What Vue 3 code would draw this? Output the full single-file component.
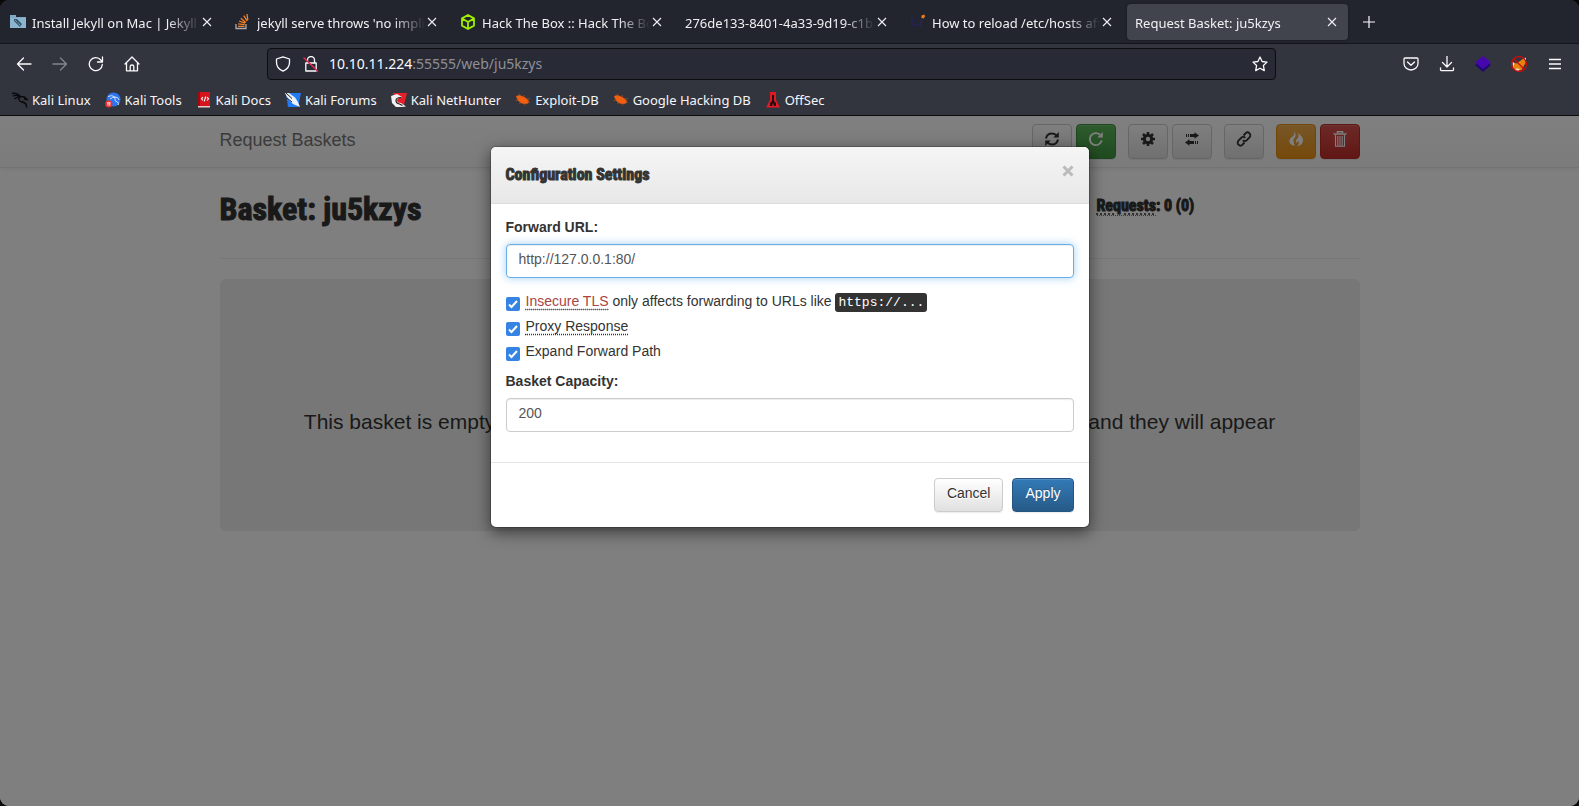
<script setup>
import { ref } from 'vue'

const tabs = [
  { title: 'Install Jekyll on Mac | Jekyll • Simple', icon: 'folder' },
  { title: "jekyll serve throws 'no implicit", icon: 'stack' },
  { title: 'Hack The Box :: Hack The Box', icon: 'cube' },
  { title: '276de133-8401-4a33-9d19-c1b2e', icon: '' },
  { title: 'How to reload /etc/hosts after', icon: 'face' },
  { title: 'Request Basket: ju5kzys', icon: '', active: true },
]

const bookmarks = [
  { label: 'Kali Linux', icon: 'dragon' },
  { label: 'Kali Tools', icon: 'tools' },
  { label: 'Kali Docs', icon: 'docs' },
  { label: 'Kali Forums', icon: 'forums' },
  { label: 'Kali NetHunter', icon: 'hunter' },
  { label: 'Exploit-DB', icon: 'bug' },
  { label: 'Google Hacking DB', icon: 'bug' },
  { label: 'OffSec', icon: 'offsec' },
]

const forwardUrl = ref('http://127.0.0.1:80/')
const insecure = ref(true)
const proxy = ref(true)
const expand = ref(true)
const capacity = ref('200')
</script>

<template>
  <div class="window">
    <header class="chrome">
      <nav class="tabs" aria-label="Tabs">
        <div v-for="t in tabs" :key="t.title" class="tab" :class="{ active: t.active }">
          <svg v-if="t.icon === 'folder'" class="ico" viewBox="0 0 16 16">
            <path d="M0 1h6v2h10v11H0z" fill="#7fa9c6" /><path d="M0 4h16v10H0z" fill="#8db4ce" />
            <path d="M4 5l3 0 5 5-2 3-6-6z" fill="#38586e" /><path d="M5 6l6 6" stroke="#a9c8dc" stroke-width=".8" stroke-dasharray="1 1" />
          </svg>
          <svg v-else-if="t.icon === 'stack'" class="ico" viewBox="0 0 16 16" fill="none">
            <path d="M1 10v4.500h10V10" stroke="#a9adb2" stroke-width="1.300" />
            <path d="M3 12.300h6.500M3.200 9.800l6.400.8M4 7l6 2.200M5.800 4.200l5 4.200M8.800 1.600l3.400 5.600M12 0l.8 6" stroke="#f48024" stroke-width="1.300" />
          </svg>
          <svg v-else-if="t.icon === 'cube'" class="ico" viewBox="0 0 16 16" fill="none" stroke="#9fef00" stroke-width="1.800" stroke-linejoin="round">
            <path d="M8 1l6 3.400v7.200L8 15l-6-3.400V4.400zM2.500 4.800L8 8l5.500-3.200M8 8v6.500" />
          </svg>
          <svg v-else-if="t.icon === 'face'" class="ico" viewBox="0 0 16 16" fill="none">
            <path d="M2 3v10M11 5v8M4 7h1M8 7h1M4 10q2.500 2 5 0" stroke="#25255a" stroke-width="1.200" />
            <path d="M11.500 1.500l3-1 .5 2-1.500 2-2-.5z" fill="#f07c1c" />
          </svg>
          <span class="tab-title">{{ t.title }}</span>
          <button class="tab-close" aria-label="Close tab">
            <svg viewBox="0 0 10 10"><path d="M1 1l8 8M9 1l-8 8" stroke="currentColor" stroke-width="1.100" /></svg>
          </button>
        </div>
        <button class="new-tab" aria-label="New tab">
          <svg viewBox="0 0 12 12"><path d="M6 0v12M0 6h12" stroke="currentColor" stroke-width="1.200" /></svg>
        </button>
      </nav>

      <div class="toolbar">
        <div class="nav-buttons">
          <button aria-label="Back"><svg class="ico" viewBox="0 0 16 16"><path d="M15 8H1.500M7.500 2L1.500 8l6 6" /></svg></button>
          <button aria-label="Forward" disabled><svg class="ico" viewBox="0 0 16 16"><path d="M1 8h13.500M8.500 2l6 6-6 6" /></svg></button>
          <button aria-label="Reload"><svg class="ico" viewBox="0 0 16 16"><path d="M14.300 8.500A6.500 6.500 0 1 1 12.800 4L14.200 5.600M14.500 1v5h-5" /></svg></button>
          <button aria-label="Home"><svg class="ico" viewBox="0 0 16 16"><path d="M1 8l7-7 7 7M2.500 6.800V14.800h11V6.800M6.200 14.500V10.500q0-1.500 1.800-1.500t1.800 1.500v4" /></svg></button>
        </div>
        <div class="urlbar">
          <svg class="ico line" viewBox="0 0 16 16"><path d="M8 .8L14.500 3v3.500c0 4-2.500 7-6.500 8.700C4 13.500 1.500 10.500 1.500 6.500V3z" /></svg>
          <svg class="ico line lock" viewBox="0 0 16 16"><path d="M4.500 7V4a3.500 3.500 0 0 1 7 0v3M2.800 7h10.400v8H2.800z" /><path d="M1 2l13.500 13" stroke="#e22850" stroke-width="1.500" /></svg>
          <span class="address" role="textbox" aria-label="Address"><b>10.10.11.224</b>:55555/web/ju5kzys</span>
          <button aria-label="Bookmark this page"><svg class="ico line" viewBox="0 0 16 16"><path d="M8 1l2.100 4.500 4.900.6-3.600 3.400.9 5.100L8 12.200l-4.300 2.400.9-5.100L1 6.100l4.900-.6z" /></svg></button>
        </div>
        <div class="actions">
          <button aria-label="Pocket"><svg class="ico" viewBox="0 0 16 16"><path d="M2 2h12q1 0 1 1v4.500a7 6.500 0 0 1-14 0V3q0-1 1-1zM4.500 6L8 9.300 11.500 6" /></svg></button>
          <button aria-label="Downloads"><svg class="ico" viewBox="0 0 16 16"><path d="M8 0v10.500M3.500 6.500L8 11l4.500-4.500M1.500 12v1.500q0 1.200 1.200 1.200h10.600q1.200 0 1.200-1.200V12" /></svg></button>
          <button aria-label="Wappalyzer"><svg class="ico" viewBox="0 0 16 16"><path class="solid" d="M0 9l8 7 8-7-8-5z" fill="#1f0a70" /><path class="solid" d="M0 6.500L8 0l8 6.500L8 13z" fill="#4608ad" /></svg></button>
          <button aria-label="FoxyProxy">
            <svg class="ico" viewBox="0 0 16 16"><path class="solid" d="M9 5l5-3.500.5 5.500-2 3.500-2 3.500-5 1-3.500-3 .5-5.500 3 1z" fill="#e8820e" /><path class="solid" d="M1.500 5.500l2 2-1.500 4zM12.500 3l2.500-1.500v4zM5 12.500l4 .5-2 2-3-.5z" fill="#f5e6d8" /><circle cx="8" cy="8" r="7.400" stroke="#cc0c10" /><path d="M2.800 2.800l10.400 10.400" stroke="#cc0c10" /></svg>
          </button>
          <button aria-label="Menu"><svg class="ico" viewBox="0 0 16 16"><path d="M2 3.500h12M2 8h12M2 12.500h12" stroke-linecap="butt" /></svg></button>
        </div>
      </div>

      <nav class="bookmarks" aria-label="Bookmarks">
        <a v-for="b in bookmarks" :key="b.label" href="#">
          <svg v-if="b.icon === 'dragon'" class="ico" viewBox="0 0 16 16" fill="none" stroke="#08090b">
            <path d="M0 1.500q5-1 8 2.500M1 4q4-1.500 7 .5M2.500 7q3-2.500 6-2.500l4 .5 2.500 2.500-3-.5M8 4.500q-3 4 2 5.500 5 1 4.500 5.500M10 9.500q3 1.500 4.500 3" stroke-width="1.400" />
          </svg>
          <svg v-else-if="b.icon === 'tools'" class="ico" viewBox="0 0 16 16" fill="none">
            <circle cx="8.500" cy="7.500" r="7" fill="#2b75f0" /><path d="M3 4.500q4-2 7 .5 3.500 0 4 3M5 7q3-2.500 5-1.500-1 3.500 2 4.500t1 3" stroke="#cfe0ff" stroke-width="1" />
            <circle cx="3.800" cy="11.800" r="3.600" fill="#e93434" /><path d="M2 10.800h3.600M3 10.800v3M4.700 10.800v3" stroke="#fff" stroke-width=".8" />
          </svg>
          <svg v-else-if="b.icon === 'docs'" class="ico" viewBox="0 0 16 16" fill="none">
            <path d="M2 0h12v15H2z" fill="#d5141c" /><path d="M2 0h2v15H2z" fill="#a00b12" /><path d="M2 14h12v1.500H2z" fill="#e8c9c9" />
            <path d="M7 5L5.500 6.800 7 8.500M11 5l1.500 1.800L11 8.500M9.700 4.500l-1.400 4.800" stroke="#fff" stroke-width="1.100" />
          </svg>
          <svg v-else-if="b.icon === 'forums'" class="ico" viewBox="0 0 16 16">
            <path d="M1 1h15l-3 14H3z" fill="#217cf3" /><path d="M0 1h4l6 4.500 3 4.500 2 5-7-3-5-5z" fill="#e9f0f8" /><path d="M1 1l6 5.500M2 6l5 4" stroke="#1b2430" stroke-width="1" fill="none" />
          </svg>
          <svg v-else-if="b.icon === 'hunter'" class="ico" viewBox="0 0 16 16" fill="none">
            <path d="M2 1h14l-3.500 14H4z" fill="#e5202b" /><path d="M0 4l6-2 5 3-4 1.500q-2 2 0 4l3 .5 5 3.500-4 .5H5L1 11z" fill="#f2f2f2" /><path d="M10 5.500q-5 0-5 3 0 3 3.500 3.500l3 1.500" stroke="#1c1c22" stroke-width="1.200" />
          </svg>
          <svg v-else-if="b.icon === 'bug'" class="ico" viewBox="0 0 16 16" fill="none">
            <path d="M1 4.500q2-2 6-.5l3 1.500 4 3.500-1 2.500-4 .5q-4-.5-6-3.500z" fill="#f2600f" />
            <path d="M4 1.500l2 3M9 3l.5 3M.5 8.500l3-.5M4.500 12l1.500-2.500M11 6.500l4 .5M12 9.500l3 1M9 11l1 2.500" stroke="#b5501f" stroke-width=".7" />
          </svg>
          <svg v-else class="ico" viewBox="0 0 16 16">
            <path d="M5 0h6v8l4 7.500H1L5 8z" fill="#e11a22" /><path d="M7 3h2v6l2 2v3H9l-1-3-1 3H5v-3l2-2z" fill="#2a0b10" />
          </svg>
          <span>{{ b.label }}</span>
        </a>
      </nav>
    </header>

    <main class="page">
      <div class="navbar">
        <div class="container bar">
          <a class="brand" href="#">Request Baskets</a>
          <div class="btns">
            <div class="grp">
              <button class="btn" aria-label="Refresh">
                <svg class="gl" viewBox="0 0 16 16" fill="none" stroke="currentColor" stroke-width="2"><path d="M2 7.500Q3 2.500 8 2.500q3 0 5 2.500M14 8.500q-1 5-6 5-3 0-5-2.500" /><path d="M14.800 1v5.500H9.300zM1.200 15V9.500h5.500z" fill="currentColor" stroke="none" /></svg>
              </button>
              <button class="btn success" aria-label="Auto refresh">
                <svg class="gl" viewBox="0 0 16 16" fill="none" stroke="currentColor" stroke-width="1.900"><path d="M13.700 9.500A6 6 0 1 1 12 3.800" /><path d="M14.800 1v5.500H9.300z" fill="currentColor" stroke="none" /></svg>
              </button>
            </div>
            <div class="grp">
              <button class="btn" aria-label="Settings">
                <svg class="gl" viewBox="0 0 16 16" fill="none" stroke="currentColor"><circle cx="8" cy="8" r="3.700" stroke-width="3" /><path d="M8 1v2.500M8 12.500V15M1 8h2.500M12.500 8H15M3 3l1.900 1.900M11.100 11.100L13 13M13 3l-1.900 1.900M4.900 11.100L3 13" stroke-width="2.600" /></svg>
              </button>
              <button class="btn" aria-label="Responses">
                <svg class="gl" viewBox="0 0 16 16" fill="currentColor"><path d="M6 3h4.500V1.200L15 4.500l-4.500 3.300V6H6zM4 3h1v3H4zM2 3h1v3H2zM10 10H5.500V8.200L1 11.500l4.500 3.300V13H10zM11 10h1v3h-1zM13 10h1v3h-1z" /></svg>
              </button>
            </div>
            <div class="grp">
              <button class="btn" aria-label="Share">
                <svg class="gl" viewBox="0 0 16 16" fill="none" stroke="currentColor" stroke-width="1.900"><path d="M7.500 4.500L9.500 2.300a2.700 2.700 0 0 1 4 4L10.800 9.200a2.700 2.700 0 0 1-4 0M8.500 11.500l-2 2.200a2.700 2.700 0 0 1-4-4L5.200 6.800a2.700 2.700 0 0 1 4 0" /></svg>
              </button>
            </div>
            <div class="grp">
              <button class="btn warning" aria-label="Delete requests">
                <svg class="gl" viewBox="0 0 16 16" fill="currentColor"><path d="M6.500 0q2.500 4.500-.5 7.500-1.500 2 .8 7.500Q1 13.500 1.300 9.500 2 7 4.500 5.500 7 3.500 6.500 0zM10 2q5.500 4 5 8t-6 5.500q3-3 1.300-5.500-1.800 0-1 2.500-2.300-1.500-.8-4Q11.500 6 10 2z" /></svg>
              </button>
              <button class="btn danger" aria-label="Delete basket">
                <svg class="gl" viewBox="0 0 16 16" fill="none" stroke="currentColor"><path d="M5.500 2V.7h5V2M1.500 3h13" stroke-width="1.500" /><path d="M3.500 4v11.300h9V4M5.800 5v10M8 5v10M10.200 5v10" stroke-width="1.100" /></svg>
              </button>
            </div>
          </div>
        </div>
      </div>

      <div class="container">
        <div class="page-header">
          <h1>Basket: ju5kzys</h1>
          <h4><abbr>Requests</abbr>: 0 (0)</h4>
        </div>
        <div class="jumbotron">
          <p>This basket is empty, send requests to <kbd>http://10.10.11.224:55555/ju5kzys</kbd> and they will appear here.</p>
        </div>
      </div>

      <div class="backdrop">
        <form class="modal" role="dialog" aria-labelledby="dlg-title" @submit.prevent>
          <div class="modal-header">
            <h3 id="dlg-title">Configuration Settings</h3>
            <button type="button" class="close" aria-label="Close">
              <svg viewBox="0 0 12 12"><path d="M1.500 1.500l9 9M10.500 1.500l-9 9" stroke="currentColor" stroke-width="3" /></svg>
            </button>
          </div>
          <div class="modal-body">
            <label class="lbl" for="fwd">Forward URL:</label>
            <input id="fwd" v-model="forwardUrl" class="field focused" type="text">
            <div class="checks">
              <label><input v-model="insecure" type="checkbox"><span><abbr class="red">Insecure TLS</abbr> only affects forwarding to URLs like <kbd>https://...</kbd></span></label>
              <label><input v-model="proxy" type="checkbox"><span><abbr>Proxy Response</abbr></span></label>
              <label><input v-model="expand" type="checkbox"><span>Expand Forward Path</span></label>
            </div>
            <label class="lbl" for="cap">Basket Capacity:</label>
            <input id="cap" v-model="capacity" class="field" type="text">
          </div>
          <div class="modal-footer">
            <button type="button" class="btn">Cancel</button>
            <button type="submit" class="btn primary">Apply</button>
          </div>
        </form>
      </div>
    </main>
  </div>
</template>

<style>
html, body, #app { height: 100%; }
body { margin: 0; background: #0b0809; }
</style>

<style scoped>
* { box-sizing: border-box; }
button { font: inherit; color: inherit; background: none; border: 0; padding: 0; }
svg { display: block; }
.window { height: 100%; min-height: 560px; display: flex; flex-direction: column; border-radius: 9px; overflow: hidden; }
.ico { width: 16px; height: 16px; flex: none; }

.chrome { color: #fbfbfe; background: #33353e; border-bottom: 1px solid #0c0c0d; font: 13px/20px "Noto Sans", sans-serif; flex: none; }
.tabs { height: 44px; display: flex; align-items: center; background: #23252e; border-bottom: 1px solid #14151a; }
.tab { flex: 0 1 221px; min-width: 0; height: 36px; margin: 0 2px; padding: 0 8px; display: flex; align-items: center; border-radius: 4px; gap: 6px; color: #f0f0f4; }
.tab.active { background: #42444d; box-shadow: 0 0 3px rgba(0, 0, 0, .4); }
.tab-title { flex: 1; min-width: 0; padding-top: 2px; overflow: hidden; white-space: nowrap; mask-image: linear-gradient(to left, transparent, #000 32px); }
.tab-close { width: 10px; height: 10px; flex: none; margin: 0 3px 0 -4px; }
.tab-close svg { width: 10px; height: 10px; }
.new-tab { margin-left: 13px; }
.new-tab svg { width: 12px; height: 12px; }

.toolbar { height: 40px; display: flex; align-items: center; padding: 0 16px; justify-content: space-between; }
.toolbar .nav-buttons, .actions { display: flex; gap: 20px; flex: none; }
.toolbar button { flex: none; }
.toolbar button svg, .line { fill: none; stroke: #fbfbfe; stroke-width: 1.300; stroke-linecap: round; stroke-linejoin: round; }
.solid { stroke: none; }
.toolbar button:disabled { opacity: .4; }
.urlbar { flex: 1; margin: 0 127px; height: 32px; display: flex; align-items: center; padding: 0 7px; background: #282a35; border: 1px solid #0d0d10; border-radius: 4px; }
.lock { margin-left: 12px; }
.address { flex: 1; margin-left: 10px; font-size: 14px; color: #8f9098; }
.address b { font-weight: 400; color: #fbfbfe; }

.bookmarks { height: 31px; display: flex; align-items: center; gap: 14px; padding: 0 12px; }
.bookmarks a { display: flex; align-items: center; gap: 4px; color: #f6f6fa; text-decoration: none; white-space: nowrap; }

.page { flex: 1; position: relative; background: #fff; color: #333; font: 14px/20px "Liberation Sans", Arial, sans-serif; overflow: hidden; }
.container { max-width: 1170px; margin: 0 auto; padding: 0 15px; }
.navbar { height: 52px; background: linear-gradient(#fff, #f8f8f8); border-bottom: 1px solid #e7e7e7; box-shadow: 0 1px 5px rgba(0, 0, 0, .075); }
.bar { display: flex; justify-content: space-between; }
.brand { font-size: 18px; line-height: 48px; color: #777; text-decoration: none; }
.btns { display: flex; gap: 12px; padding-top: 8px; }
.grp { display: flex; gap: 4px; }
.btn { height: 34px; padding: 0 12px 4px; border: 1px solid #ccc; border-radius: 4px; color: #333; background: linear-gradient(#fff, #e0e0e0); text-shadow: 0 1px 0 #fff; box-shadow: inset 0 1px 0 rgba(255, 255, 255, .15), 0 1px 1px rgba(0, 0, 0, .075); }
.gl { width: 16px; height: 16px; }
.btns .btn { height: 35px; width: 40px; padding: 0 11px 5px; }
.btn.success { background: linear-gradient(#5cb85c, #419641); border-color: #3e8f3e; color: #fff; }
.btn.warning { background: linear-gradient(#f0ad4e, #eb9316); border-color: #e38d13; color: #fff; }
.btn.danger { background: linear-gradient(#d9534f, #c12e2a); border-color: #b92c28; color: #fff; }
.btn.primary { background: linear-gradient(#337ab7, #265a88); border-color: #245580; color: #fff; text-shadow: 0 -1px 0 rgba(0, 0, 0, .2); }

h1, h3, h4 { margin: 0; font-family: "Roboto Condensed", Roboto, sans-serif; font-weight: 700; }
.page-header { height: 91px; display: flex; border-bottom: 1px solid #eee; margin-bottom: 20px; padding-top: 20px; }
h1 { flex: 0 0 877px; font-size: 32px; line-height: 42px; -webkit-text-stroke: 1px #333; }
h3, h4 { font-size: 16px; -webkit-text-stroke: 1px #333; }
h3 { line-height: 25px; }
h4 { line-height: 36px; }
abbr { border-bottom: 1px dotted #777; }
.jumbotron { background: #eee; border-radius: 6px; padding: 128px 56px 48px; min-height: 252px; text-align: center; }
p { max-width: 1020px; margin: 0 auto; font-size: 21px; line-height: 30px; }
kbd { font: 13px/18px "Liberation Mono", monospace; color: #fff; background: #333; border-radius: 3px; padding: 2px 3px; }
p kbd { font-size: 20px; padding: 2px 10px; }

.backdrop { position: absolute; inset: 0; background: rgba(0, 0, 0, .5); padding: 30px 15px; }
.modal { max-width: 600px; margin: 0 auto; background: #fff; background-clip: padding-box; border: 1px solid rgba(0, 0, 0, .2); border-radius: 6px; box-shadow: 0 5px 15px rgba(0, 0, 0, .5); overflow: hidden; }
.modal-header { height: 57px; padding: 15px; display: flex; justify-content: space-between; background: linear-gradient(#f5f5f5, #e8e8e8); border-bottom: 1px solid #ddd; }
.close { width: 12px; height: 12px; color: #bbb; margin-top: 3px; }
.close svg { width: 12px; height: 12px; }
.modal-body { padding: 15px; }
.lbl { display: block; font-weight: 700; line-height: 16px; margin-bottom: 9px; }
.field { display: block; width: 100%; height: 34px; margin-bottom: 15px; padding: 4px 12px 8px; font: inherit; color: #555; border: 1px solid #ccc; border-radius: 4px; background: #fff; box-shadow: inset 0 1px 1px rgba(0, 0, 0, .075); outline: none; }
.focused { border-color: #66afe9; box-shadow: inset 0 1px 1px rgba(0, 0, 0, .075), 0 0 8px rgba(102, 175, 233, .6); }
.checks { display: flex; flex-direction: column; gap: 5px; margin-bottom: 10px; }
.checks label { display: flex; height: 20px; align-items: flex-start; gap: 6px; line-height: 16px; }
.checks abbr { text-decoration: underline dotted; text-underline-offset: 3px; border-bottom-color: #aaa; }
.checks input { appearance: none; width: 14px; height: 14px; flex: none; margin: 4px 0 0; border: 1px solid #bbb; border-radius: 2px; }
.checks input:checked { border: 0; background: #3584e4 url("data:image/svg+xml,%3Csvg xmlns='http://www.w3.org/2000/svg' viewBox='0 0 14 14'%3E%3Cpath d='M3 7.500l2.500 2.500L11 4' fill='none' stroke='white' stroke-width='2'/%3E%3C/svg%3E"); }
.red { color: #a94442; }
h4 abbr { text-decoration: underline dotted; text-underline-offset: 3px; }
.modal-footer { padding: 15px; border-top: 1px solid #e5e5e5; display: flex; justify-content: flex-end; gap: 9px; }
</style>
